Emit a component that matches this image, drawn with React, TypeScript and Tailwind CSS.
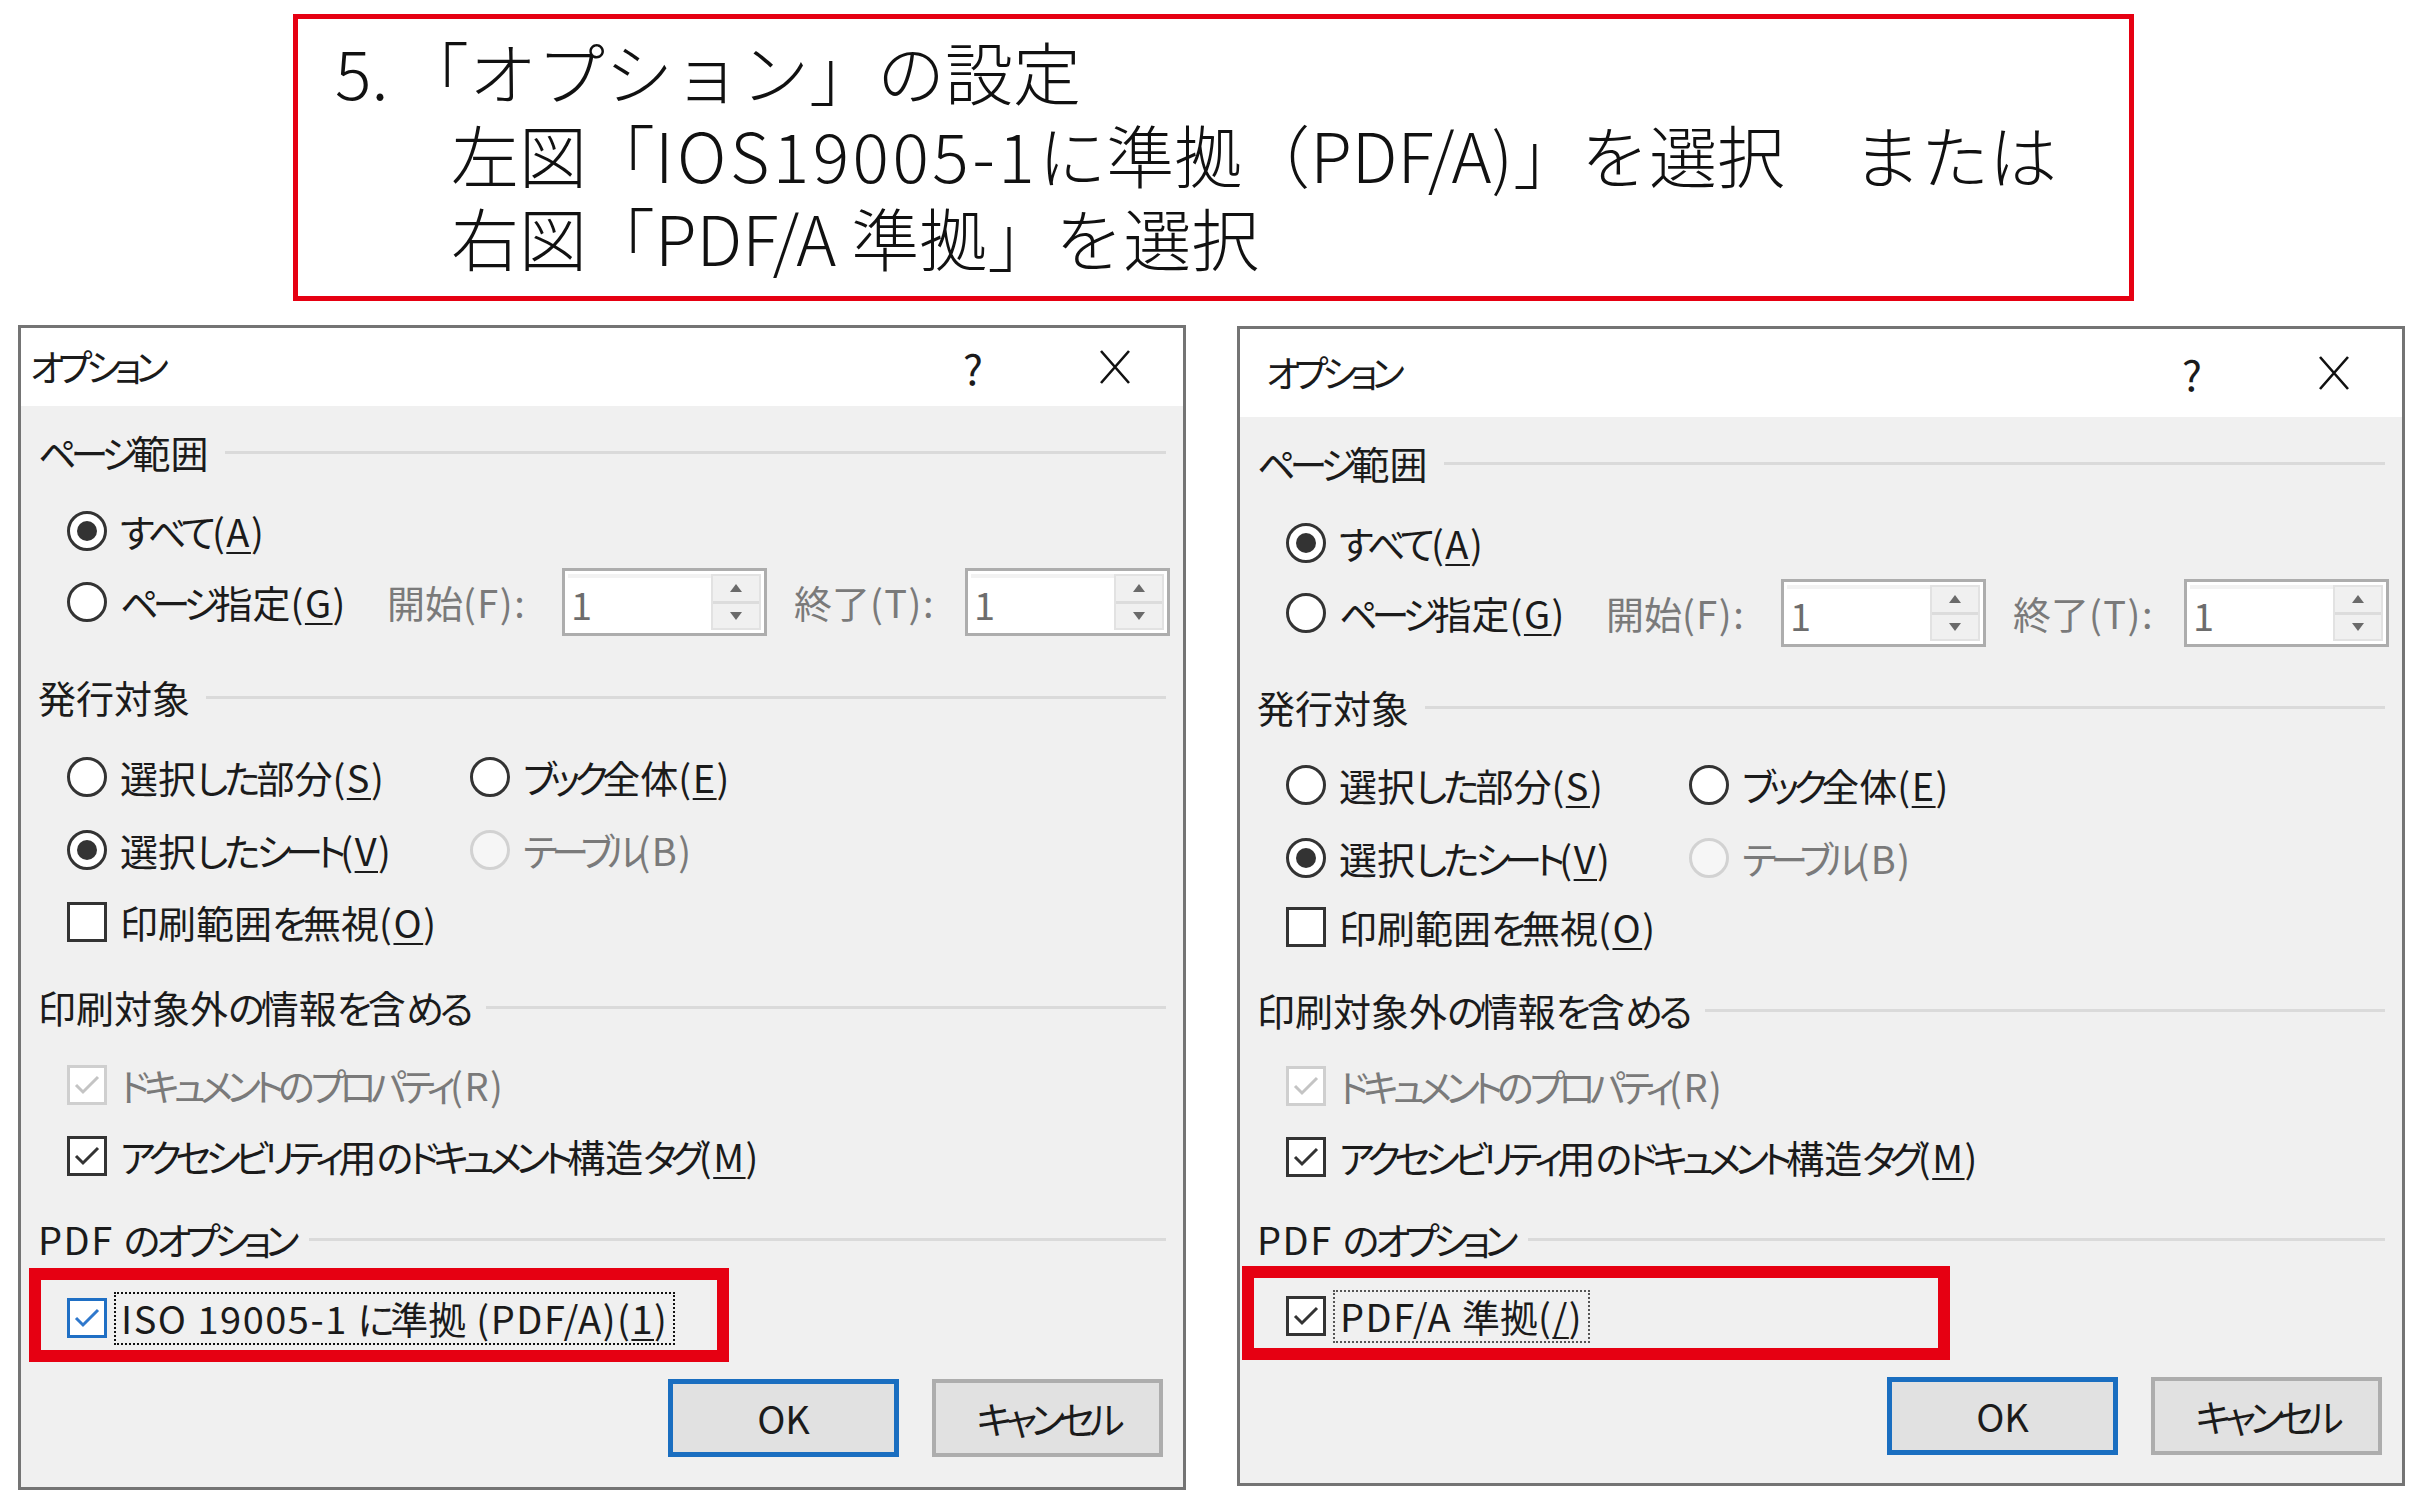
import type { ReactNode } from 'react';

const jp = "font-['Noto_Sans_CJK_JP','Noto_Sans',sans-serif] [font-feature-settings:'palt']";

// Meiryo UI has much narrower kana than Noto, so tighten kana runs and widen latin runs
function T({ s }: { s: string }) {
  const parts = s.match(/[\u3040-\u309f]+|[\u30a0-\u30ff]+|[\x20-\x7e]+|[^\u3040-\u30ff\x20-\x7e]+/g) || [];
  return (
    <>
      {parts.map((p, i) => {
        const cls = /^[\u3040-\u309f]/.test(p)
          ? 'tracking-[-4px]'
          : /^[\u30a0-\u30ff]/.test(p)
          ? 'tracking-[-6px]'
          : /^[\x20-\x7e]/.test(p)
          ? 'tracking-[1.5px]'
          : '';
        return (
          <span key={i} className={cls}>
            {p}
          </span>
        );
      })}
    </>
  );
}

function U({ children }: { children: ReactNode }) {
  return <span className="underline decoration-[2px] underline-offset-[5px] tracking-[1.5px]">{children}</span>;
}

function Radio({ checked = false, disabled = false }: { checked?: boolean; disabled?: boolean }) {
  return (
    <div
      className={`w-[40px] h-[40px] shrink-0 rounded-full border-[3px] flex items-center justify-center ${
        disabled ? 'border-[#d2d2d2] bg-[#f6f6f6]' : 'border-[#333333] bg-white'
      }`}
    >
      {checked && <div className="w-[20px] h-[20px] rounded-full bg-[#333333]" />}
    </div>
  );
}

function Check({ checked = false, tone = 'dark' }: { checked?: boolean; tone?: 'dark' | 'disabled' | 'blue' }) {
  const border = tone === 'blue' ? 'border-[#1f6fc4]' : tone === 'disabled' ? 'border-[#cfcfcf]' : 'border-[#333333]';
  const stroke = tone === 'blue' ? '#2f78cc' : tone === 'disabled' ? '#c4c4c4' : '#333333';
  return (
    <div className={`w-[40px] h-[40px] shrink-0 border-[3px] bg-white flex items-center justify-center ${border}`}>
      {checked && (
        <svg width="30" height="30" viewBox="0 0 30 30">
          <path d="M4 15 L11 22 L26 7" fill="none" stroke={stroke} strokeWidth="3" />
        </svg>
      )}
    </div>
  );
}

function Spin() {
  return (
    <div className="w-[205px] h-[68px] shrink-0 border-[3px] border-[#adadad] bg-white flex p-[3px]">
      <div className="flex-1 flex items-center pl-[3px] text-[#6d6d6d] border-t-[4px] border-[#f2f2f2]">1</div>
      <div className="w-[50px] flex flex-col bg-[#f0f0f0] border-[2px] border-[#e2e2e2]">
        <div className="flex-1 flex items-center justify-center border-b-[3px] border-[#dcdcdc]">
          <svg width="12" height="8" viewBox="0 0 12 8">
            <path d="M0 8 L6 0 L12 8 Z" fill="#6a6a6a" />
          </svg>
        </div>
        <div className="flex-1 flex items-center justify-center">
          <svg width="12" height="8" viewBox="0 0 12 8">
            <path d="M0 0 L12 0 L6 8 Z" fill="#6a6a6a" />
          </svg>
        </div>
      </div>
    </div>
  );
}

function Heading({ label, mt }: { label: string; mt: string }) {
  return (
    <div className={`flex items-center h-[60px] pl-[17px] pr-[17px] ${mt}`}>
      <span className="whitespace-nowrap">
        <T s={label} />
      </span>
      <div className="flex-1 h-[3px] bg-[#dadada] ml-[16px]" />
    </div>
  );
}

type Gaps = {
  title: string;
  titlePad: string;
  pt: string;
  m1: string;
  m2: string;
  h2: string;
  m3: string;
  m4: string;
  m5: string;
  h3: string;
  m6: string;
  m7: string;
  h4: string;
  m8: string;
  btn: string;
};

const LEFT: Gaps = {
  title: 'h-[78px]',
  titlePad: 'pl-[9px]',
  pt: 'pt-[16px]',
  m1: 'mt-[19px]',
  m2: 'mt-[11px]',
  h2: 'mt-[35px]',
  m3: 'mt-[20px]',
  m4: 'mt-[13px]',
  m5: 'mt-[12px]',
  h3: 'mt-[25px]',
  m6: 'mt-[18px]',
  m7: 'mt-[11px]',
  h4: 'mt-[23px]',
  m8: 'mt-[19px]',
  btn: 'mt-[31px]',
};

const RIGHT: Gaps = {
  title: 'h-[88px]',
  titlePad: 'pl-[26px]',
  pt: 'pt-[16px]',
  m1: 'mt-[20px]',
  m2: 'mt-[10px]',
  h2: 'mt-[34px]',
  m3: 'mt-[18px]',
  m4: 'mt-[13px]',
  m5: 'mt-[9px]',
  h3: 'mt-[23px]',
  m6: 'mt-[16px]',
  m7: 'mt-[11px]',
  h4: 'mt-[22px]',
  m8: 'mt-[17px]',
  btn: 'mt-[31px]',
};

function Dialog({
  g,
  height,
  pdfBox,
  pdfLabel,
  blue,
}: {
  g: Gaps;
  height: string;
  pdfBox: string;
  pdfLabel: ReactNode;
  blue: boolean;
}) {
  return (
    <div className={`w-[1168px] ${height} shrink-0 border-[3px] border-[#747474] bg-[#f0f0f0] flex flex-col text-[38px] text-[#1b1b1b] ${jp}`}>
      <div className={`${g.title} bg-white flex items-center ${g.titlePad} pr-[38px] shrink-0`}>
        <span className="flex-1 text-[37px]">
          <T s="オプション" />
        </span>
        <span className="w-[60px] text-center text-[42px] leading-none">?</span>
        <div className="w-[60px] ml-[82px] flex items-center justify-center">
          <svg width="32" height="36" viewBox="0 0 32 36">
            <path d="M2 2 L30 34 M30 2 L2 34" stroke="#111" strokeWidth="2.6" fill="none" />
          </svg>
        </div>
      </div>

      <div className={`flex-1 flex flex-col ${g.pt} leading-none`}>
        <Heading label="ページ範囲" mt="" />

        <div className={`flex items-center h-[60px] pl-[46px] ${g.m1}`}>
          <Radio checked />
          <span className="ml-[13px] whitespace-nowrap">
            <T s="すべて(" />
            <U>A</U>
            <T s=")" />
          </span>
        </div>

        <div className={`flex items-center h-[60px] pl-[46px] ${g.m2}`}>
          <div className="w-[320px] flex items-center">
            <Radio />
            <span className="ml-[13px] whitespace-nowrap">
              <T s="ページ指定(" />
              <U>G</U>
              <T s=")" />
            </span>
          </div>
          <span className="w-[175px] text-[#7a7a7a] whitespace-nowrap">
            <T s="開始(F):" />
          </span>
          <Spin />
          <span className="w-[198px] pl-[27px] text-[#7a7a7a] whitespace-nowrap">
            <T s="終了(T):" />
          </span>
          <Spin />
        </div>

        <Heading label="発行対象" mt={g.h2} />

        <div className={`flex items-center h-[60px] pl-[46px] ${g.m3}`}>
          <div className="w-[403px] flex items-center">
            <Radio />
            <span className="ml-[13px] whitespace-nowrap">
              <T s="選択した部分(" />
              <U>S</U>
              <T s=")" />
            </span>
          </div>
          <Radio />
          <span className="ml-[13px] whitespace-nowrap">
            <T s="ブック全体(" />
            <U>E</U>
            <T s=")" />
          </span>
        </div>

        <div className={`flex items-center h-[60px] pl-[46px] ${g.m4}`}>
          <div className="w-[403px] flex items-center">
            <Radio checked />
            <span className="ml-[13px] whitespace-nowrap">
              <T s="選択したシート(" />
              <U>V</U>
              <T s=")" />
            </span>
          </div>
          <Radio disabled />
          <span className="ml-[13px] whitespace-nowrap text-[#7a7a7a]">
            <T s="テーブル(B)" />
          </span>
        </div>

        <div className={`flex items-center h-[60px] pl-[46px] ${g.m5}`}>
          <Check />
          <span className="ml-[13px] whitespace-nowrap">
            <T s="印刷範囲を無視(" />
            <U>O</U>
            <T s=")" />
          </span>
        </div>

        <Heading label="印刷対象外の情報を含める" mt={g.h3} />

        <div className={`flex items-center h-[60px] pl-[46px] ${g.m6}`}>
          <Check checked tone="disabled" />
          <span className="ml-[13px] whitespace-nowrap text-[#7a7a7a]">
            <T s="ドキュメントのプロパティ(R)" />
          </span>
        </div>

        <div className={`flex items-center h-[60px] pl-[46px] ${g.m7}`}>
          <Check checked />
          <span className="ml-[13px] whitespace-nowrap">
            <T s="アクセシビリティ用のドキュメント構造タグ(" />
            <U>M</U>
            <T s=")" />
          </span>
        </div>

        <Heading label="PDF のオプション" mt={g.h4} />

        <div className={`relative flex items-center h-[60px] pl-[46px] ${g.m8}`}>
          <div className={`absolute top-[-20px] h-[94px] border-[12px] border-[#e60012] ${pdfBox}`} />
          <Check checked tone={blue ? 'blue' : 'dark'} />
          <span
            className={`ml-[7px] px-[5px] h-[53px] flex items-center whitespace-nowrap border-[2px] border-dotted ${
              blue ? 'border-[#111]' : 'border-[#555]'
            }`}
          >
            <span>{pdfLabel}</span>
          </span>
        </div>

        <div className={`flex justify-end items-center gap-[33px] pr-[20px] ${g.btn}`}>
          <div className="w-[231px] h-[78px] border-[5px] border-[#1a6ec0] bg-[#e1e1e1] flex items-center justify-center">
            OK
          </div>
          <div className="w-[231px] h-[78px] border-[4px] border-[#adadad] bg-[#e1e1e1] flex items-center justify-center">
            <span>
              <T s="キャンセル" />
            </span>
          </div>
        </div>
      </div>
    </div>
  );
}

export default function App() {
  return (
    <div className="w-[2428px] h-[1506px] bg-white overflow-hidden">
      <div className="ml-[293px] mt-[14px] w-[1841px] h-[287px] border-[5px] border-[#e60012] pl-[37px] pt-[10px] font-['Noto_Sans_CJK_JP','Noto_Sans',sans-serif] font-light text-[68px] leading-[83px] text-[#111]">
        <div className="whitespace-nowrap">
          <span className="inline-block w-[66px]">5.</span>「オプション」の設定
        </div>
        <div className="whitespace-nowrap pl-[116px]">
          左図「<span className="tracking-[3.5px]">IOS19005-1</span>に準拠（PDF/A)」を選択　または
        </div>
        <div className="whitespace-nowrap pl-[116px]">右図「PDF/A 準拠」を選択</div>
      </div>

      <div className="flex items-start pl-[18px] mt-[24px] gap-[51px]">
        <Dialog
          g={LEFT}
          height="h-[1165px]"
          pdfBox="left-[8px] w-[700px]"
          blue
          pdfLabel={
            <>
              <T s="ISO 19005-1 に準拠 (PDF/A)(" />
              <U>1</U>
              <T s=")" />
            </>
          }
        />
        <div className="mt-[1px]">
          <Dialog
            g={RIGHT}
            height="h-[1160px]"
            pdfBox="left-[2px] w-[708px]"
            blue={false}
            pdfLabel={
              <>
                <T s="PDF/A 準拠(" />
                <U>/</U>
                <T s=")" />
              </>
            }
          />
        </div>
      </div>
    </div>
  );
}
